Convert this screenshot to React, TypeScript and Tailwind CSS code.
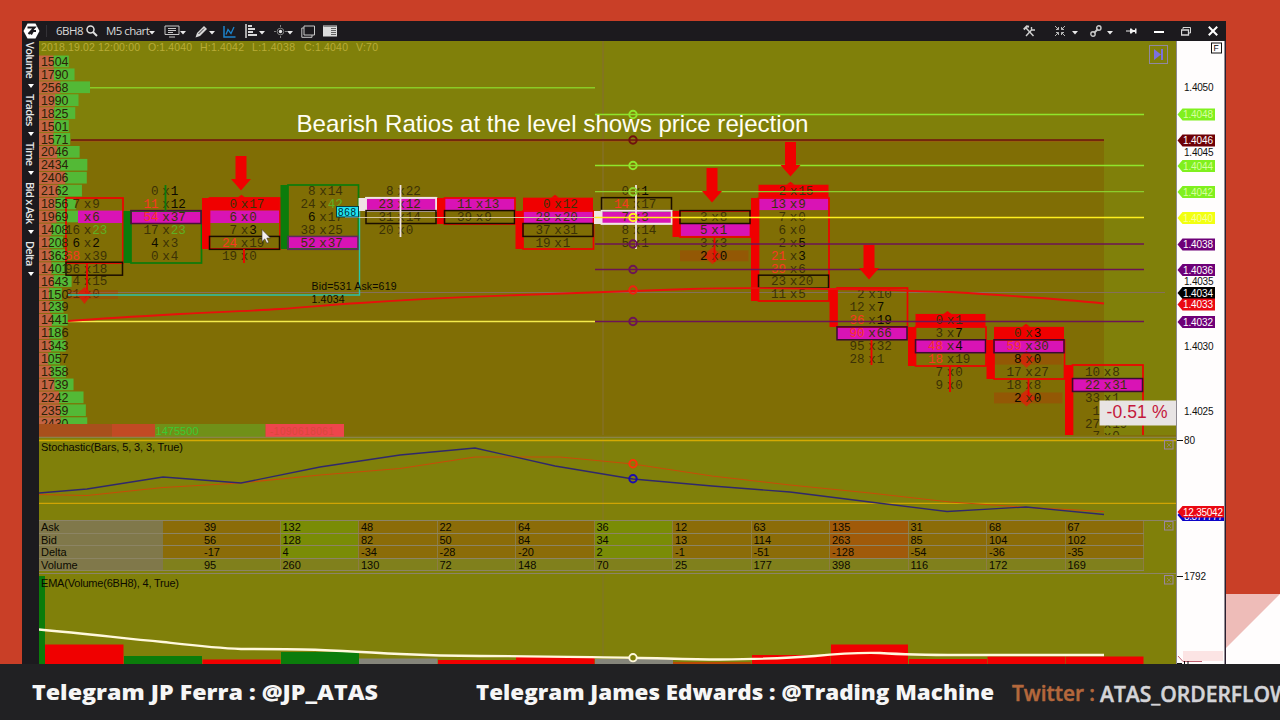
import React from 'react';

const ROW_H = 12.92;
const ROW_0 = 62;
const rowY = (row: number) => ROW_0 + row * ROW_H;
const rowTop = (row: number) => rowY(row) - ROW_H / 2;

const SANS = '"Liberation Sans", Arial, sans-serif';
const MONO = '"Liberation Mono", "Courier New", monospace';

const RED = '#f00000';
const GREEN = '#0b7c0b';
const WHITE = '#f0e4e4';
const MAGENTA = '#d913b5';
const OLIVE = '#80800a';

const profile = [
  1504, 1790, 2568, 1990, 1825, 1501, 1571, 2046, 2434, 2406, 2162, 1856, 1969, 1408, 1208,
  1363, 1401, 1643, 1150, 1239, 1441, 1186, 1343, 1057, 1358, 1739, 2242, 2359, 2430,
];
const redShare = [0.49, 0.42, 0.42, 0.41, 0.42, 0.5, 0.46, 0.45, 0.44, 0.55];

type Tone = 'd' | 'k' | 'r' | 'g';
const tones: Record<Tone, string> = { d: '#3c3206', k: '#0c0a00', r: '#f83822', g: '#5fae24' };

type Kind = 'poc' | 'box' | 'hot' | 'glow';

interface Cell {
  bid: string;
  ask: string;
  kind?: Kind;
  bt?: Tone;
  at?: Tone;
}

interface Bar {
  cx: number;
  first: number;
  color: string;
  body: [number, number];
  wick?: [number, number];
  pocEdge?: string;
  cells: Cell[];
}

const c = (bid: string, ask: string, kind?: Kind, bt: Tone = 'd', at: Tone = 'd'): Cell => ({ bid, ask, kind, bt, at });

const bars: Bar[] = [
  {
    cx: 87.5, first: 11, color: RED, body: [198, 263], wick: [263, 296],
    cells: [c('7', '9'), c('', '6', 'poc'), c('16', '23', undefined, 'd', 'g'), c('6', '2', undefined, 'k', 'k'), c('68', '39', undefined, 'r'), c('96', '18', 'box'), c('4', '15'), c('31', '0')],
  },
  {
    cx: 166, first: 10, color: GREEN, body: [211, 263], wick: [185, 211], pocEdge: '#4a0f3a',
    cells: [c('0', '1', undefined, 'd', 'k'), c('11', '12', undefined, 'r', 'k'), c('54', '37', 'poc', 'r'), c('17', '23', undefined, 'd', 'g'), c('4', '3', undefined, 'k'), c('0', '4')],
  },
  {
    cx: 244.5, first: 11, color: RED, body: [198, 249], wick: [249, 263],
    cells: [c('0', '17', 'hot'), c('6', '0', 'poc'), c('7', '3', undefined, 'd', 'k'), c('24', '19', 'box', 'r'), c('19', '0')],
  },
  {
    cx: 323, first: 10, color: GREEN, body: [185, 249], pocEdge: '#5b2a5b',
    cells: [c('8', '14'), c('24', '42', undefined, 'd', 'g'), c('6', '17', undefined, 'k'), c('38', '25'), c('52', '37', 'poc')],
  },
  {
    cx: 401, first: 10, color: WHITE, body: [198, 211], wick: [185, 237], pocEdge: WHITE,
    cells: [c('8', '22'), c('23', '12', 'poc'), c('31', '14', 'box'), c('20', '0')],
  },
  {
    cx: 479.5, first: 11, color: RED, body: [198, 224],
    cells: [c('11', '13', 'poc'), c('39', '9', 'box')],
  },
  {
    cx: 558, first: 11, color: RED, body: [211, 249],
    cells: [c('0', '12', 'hot'), c('28', '20', 'poc'), c('37', '31', 'box'), c('19', '1')],
  },
  {
    cx: 636.5, first: 10, color: WHITE, body: [211, 224], wick: [185, 249], pocEdge: WHITE,
    cells: [c('0', '1', undefined, 'd', 'k'), c('14', '17', 'box', 'r'), c('7', '3', 'poc'), c('8', '14'), c('5', '1')],
  },
  {
    cx: 715, first: 12, color: RED, body: [211, 237], wick: [237, 262],
    cells: [c('3', '8', 'box'), c('5', '1', 'poc'), c('3', '3'), c('2', '0', 'glow', 'k', 'k')],
  },
  {
    cx: 793.5, first: 10, color: RED, body: [198, 301],
    cells: [c('2', '15', 'hot'), c('13', '9', 'poc'), c('7', '0'), c('6', '0'), c('2', '5', undefined, 'd', 'k'), c('21', '3', undefined, 'r', 'k'), c('39', '6', undefined, 'r'), c('23', '20', 'box'), c('11', '5')],
  },
  {
    cx: 872, first: 18, color: RED, body: [288, 327], wick: [340, 365], pocEdge: '#3a0b30',
    cells: [c('2', '10'), c('12', '7', undefined, 'd', 'k'), c('36', '19', undefined, 'r', 'k'), c('90', '66', 'poc', 'r'), c('95', '32'), c('28', '1')],
  },
  {
    cx: 950.5, first: 20, color: RED, body: [327, 366], wick: [366, 392], pocEdge: '#3a0b30',
    cells: [c('0', '1', 'hot'), c('3', '7', undefined, 'd', 'k'), c('48', '4', 'poc', 'r', 'k'), c('18', '19', undefined, 'r'), c('7', '0'), c('9', '0')],
  },
  {
    cx: 1029, first: 21, color: RED, body: [340, 379], wick: [379, 396], pocEdge: '#3a0b30',
    cells: [c('0', '3', 'hot', 'd', 'k'), c('59', '30', 'poc', 'r'), c('8', '0', 'glow', 'k', 'k'), c('17', '27'), c('18', '8'), c('2', '0', 'glow', 'k', 'k')],
  },
  {
    cx: 1107.5, first: 24, color: RED, body: [365, 446], pocEdge: '#3a0b30',
    cells: [c('10', '8'), c('22', '31', 'poc'), c('33', '1'), c('1', '5'), c('27', '19'), c('7', '0')],
  },
];

const arrows = [
  { x: 241, y: 156 },
  { x: 712, y: 168 },
  { x: 790.5, y: 142 },
  { x: 869, y: 245 },
];

const levels = [
  { y: 114.5, color: '#8fe62c', x1: 595, x2: 1144 },
  { y: 140, color: '#701010', x1: 71, x2: 1104 },
  { y: 165.5, color: '#8fe62c', x1: 595, x2: 1144 },
  { y: 191.7, color: '#8cce2c', x1: 595, x2: 1144 },
  { y: 217.5, color: '#fff01e', x1: 595, x2: 1144 },
  { y: 244, color: '#6c1456', x1: 595, x2: 1144 },
  { y: 269.5, color: '#6c1456', x1: 595, x2: 1144 },
  { y: 321.5, color: '#6c1456', x1: 595, x2: 1144 },
];

const stats = [
  { name: 'Ask', values: [39, 132, 48, 22, 64, 36, 12, 63, 135, 31, 68, 67] },
  { name: 'Bid', values: [56, 128, 82, 50, 84, 34, 13, 114, 263, 85, 104, 102] },
  { name: 'Delta', values: [-17, 4, -34, -28, -20, 2, -1, -51, -128, -54, -36, -35] },
  { name: 'Volume', values: [95, 260, 130, 72, 148, 70, 25, 177, 398, 116, 172, 169] },
];

const volumes = [
  { x: 39, y: 576, w: 6, color: GREEN },
  { x: 45, y: 644.5, w: 78.5, color: RED },
  { x: 124, y: 656, w: 78, color: GREEN },
  { x: 202.5, y: 659.5, w: 78, color: RED },
  { x: 281, y: 652, w: 78, color: GREEN },
  { x: 359, y: 658.5, w: 78.5, color: '#85857a' },
  { x: 438, y: 660, w: 78, color: RED },
  { x: 516, y: 657, w: 78.5, color: RED },
  { x: 595, y: 659, w: 78, color: '#85857a' },
  { x: 673, y: 662, w: 78, color: '#b84a05' },
  { x: 752, y: 655, w: 78.5, color: RED },
  { x: 831, y: 644.5, w: 77, color: RED },
  { x: 909, y: 659, w: 78, color: RED },
  { x: 987.5, y: 656.5, w: 78, color: RED },
  { x: 1066, y: 656.5, w: 77.5, color: RED },
];

const priceTicks = [
  { y: 87.5, text: '1.4050' },
  { y: 152, text: '1.4045' },
  { y: 281.5, text: '1.4035' },
  { y: 346, text: '1.4030' },
  { y: 411.5, text: '1.4025' },
];

const priceTags = [
  { y: 114.5, text: '1.4048', bg: '#80f01e', fg: '#d8ffa0' },
  { y: 140.5, text: '1.4046', bg: '#6e0007', fg: '#ffffff' },
  { y: 166, text: '1.4044', bg: '#80f01e', fg: '#d8ffa0' },
  { y: 192, text: '1.4042', bg: '#80f01e', fg: '#d8ffa0' },
  { y: 218, text: '1.4040', bg: '#f2ff10', fg: '#f8ff9a' },
  { y: 244.5, text: '1.4038', bg: '#6e0078', fg: '#ffffff' },
  { y: 270, text: '1.4036', bg: '#6e0078', fg: '#ffffff' },
  { y: 293, text: '1.4034', bg: '#000000', fg: '#ffffff' },
  { y: 304.5, text: '1.4033', bg: '#ea0812', fg: '#ffffff' },
  { y: 322, text: '1.4032', bg: '#6e0078', fg: '#ffffff' },
];

const Ring: React.FC<{ y: number; color: string }> = ({ y, color }) => (
  <circle cx={633} cy={y} r={3.7} fill="none" stroke={color} strokeWidth={2} />
);

const CloseBox: React.FC<{ y: number }> = ({ y }) => (
  <g stroke="#9a86a0" fill="none">
    <rect x={1164.5} y={y + 0.5} width={8.5} height={8.5} />
    <path d={`M1167 ${y + 3}l4 4m0 -4l-4 4`} strokeWidth={0.6} />
  </g>
);

const BarShape: React.FC<{ bar: Bar }> = ({ bar }) => {
  const isFirst = bar.cx < 90;
  const left = isFirst ? 66 : bar.cx - 35;
  const width = bar.cx + 35.5 - left;
  const [top, bottom] = bar.body;
  return (
    <g>
      {bar.cells.map((cell, i) => {
        const y = rowTop(bar.first + i);
        if (cell.kind === 'poc') {
          const x = isFirst ? 78 : left;
          return <rect key={i} x={x} y={y} width={bar.cx + 35 - x} height={ROW_H - 0.5} fill={MAGENTA} />;
        }
        if (cell.kind === 'hot') {
          return (
            <g key={i} fill={RED}>
              <rect x={left} y={y} width={width - 0.5} height={ROW_H} />
              <path d={`M${bar.cx - 7} ${y}l4 -3l4 3z`} />
            </g>
          );
        }
        if (cell.kind === 'glow') {
          return (
            <g key={i}>
              <rect x={left} y={y + 1} width={width - 2} height={ROW_H - 2} fill="#c02808" opacity={0.3} />
              <path d={`M${bar.cx - 2.5} ${y - 2}l9 8.5l-9 8.5l-9 -8.5z`} fill="#e81808" opacity={0.7} />
            </g>
          );
        }
        return null;
      })}
      {!isFirst && <rect x={bar.cx - 42.5} y={top} width={7.5} height={bottom - top} fill={bar.color} />}
      <rect x={left} y={top} width={width} height={bottom - top} fill="none" stroke={bar.color} strokeWidth={1.7} />
      {bar.cells.map((cell, i) => {
        const y = rowTop(bar.first + i);
        if (cell.kind === 'box') {
          return <rect key={i} x={left} y={y} width={width - 0.5} height={ROW_H} fill="none" stroke="#1a0d00" strokeWidth={1.5} />;
        }
        if (cell.kind === 'poc' && bar.pocEdge) {
          return <rect key={i} x={left} y={y} width={width - 0.5} height={ROW_H} fill="none" stroke={bar.pocEdge} strokeWidth={1.5} />;
        }
        return null;
      })}
      {bar.cells.map((cell, i) => {
        const y = rowY(bar.first + i) + 3.8;
        return (
          <g key={i} fontFamily={MONO} fontSize={12.6}>
            <text x={bar.cx - 7.5} y={y} textAnchor="end" fill={tones[cell.bt ?? 'd']}>{cell.bid}</text>
            <text x={bar.cx} y={y} textAnchor="middle" fill={tones.d}>x</text>
            <text x={bar.cx + 4.8} y={y} fill={tones[cell.at ?? 'd']}>{cell.ask}</text>
          </g>
        );
      })}
      {bar.wick && (
        <line x1={bar.cx - 0.5} x2={bar.cx - 0.5} y1={bar.wick[0]} y2={bar.wick[1]} stroke={bar.color} strokeWidth={1.8} />
      )}
    </g>
  );
};

const PricePanel: React.FC = () => (
  <svg className="block" width={1137} height={397} viewBox="39 41 1137 397" fontFamily={SANS}>
    <rect x={39} y={41} width={1137} height={397} fill={OLIVE} />
    <rect x={39} y={140} width={1065} height={297} fill="#806e05" />
    <line x1={603} x2={603} y1={41} y2={438} stroke="#85702c" strokeWidth={1.3} />
    <g fontSize={10.5} fill="#b8ac36">
      <text x={41} y={51} textLength={99}>2018.19.02 12:00:00</text>
      <text x={148} y={51} textLength={44}>O:1.4040</text>
      <text x={200} y={51} textLength={44}>H:1.4042</text>
      <text x={252} y={51} textLength={43}>L:1.4038</text>
      <text x={304} y={51} textLength={44}>C:1.4040</text>
      <text x={356} y={51} textLength={22}>V:70</text>
    </g>

    <line x1={68} x2={1165} y1={292.5} y2={292.5} stroke="#85705a" />
    <line x1={90} x2={595} y1={87.7} y2={87.7} stroke="#8acc26" strokeWidth={1.6} />
    <line x1={68} x2={595} y1={321.5} y2={321.5} stroke="#f4ec4c" strokeWidth={1.3} />
    <line x1={71} x2={1104} y1={141.5} y2={141.5} stroke="#98600c" strokeWidth={0.8} />

    {/* volume profile */}
    {profile.map((volume, i) => {
      const width = (volume / 2568) * 51;
      const red = width * (redShare[i] ?? 0.45);
      return (
        <g key={i}>
          <rect x={39} y={rowTop(i)} width={red} height={ROW_H - 0.8} fill="#c46444" />
          <rect x={39 + red} y={rowTop(i)} width={width - red} height={ROW_H - 1.2} fill="#53b936" />
        </g>
      );
    })}

    {bars.map((bar) => <BarShape key={bar.cx} bar={bar} />)}

    <rect x={68} y={290} width={50} height={9} fill="#c02808" opacity={0.3} />
    <path d="M77 294L84.500 287L92 294L84.500 304z" fill="#e01808" opacity={0.8} />
    {profile.map((volume, i) => (
      <text key={i} x={41} y={rowY(i) + 4} fontSize={12} fill="#2a2206" textLength={27.5} lengthAdjust="spacingAndGlyphs">{volume}</text>
    ))}

    {/* total volume strip */}
    <rect x={39} y={424} width={116} height={13} fill="#a8501c" />
    <rect x={112} y={424} width={43} height={13} fill="#c24a24" />
    <rect x={155} y={424} width={110.5} height={13} fill="#709018" />
    <rect x={265.5} y={424} width={78.5} height={13} fill="#ee454c" />
    <text x={155.5} y={434.5} fontSize={11} fill="#3cc832" textLength={43}>1475500</text>
    <text x={270} y={434.5} fontSize={10} fill="#d8483c" textLength={64}>-1090618061</text>

    <path
      d="M68 321C110 318 145 316 180 314C220 312 250 311 280 309C310 307 330 304.500 360 303C410 299.500 460 297 520 295C580 292.500 640 291 690 289C740 287 790 288.500 830 289C870 289 910 291 950 292C1000 295 1050 298 1104 303.500"
      fill="none"
      stroke="#e8100c"
      strokeWidth={1.8}
    />
    <Ring y={290} color="#f02010" />

    <path d="M68 295H359.500V211" fill="none" stroke="#2cc4a8" strokeWidth={1.4} />
    <line x1={345} x2={595} y1={217.5} y2={217.5} stroke="#d8c8a0" strokeWidth={1.1} />
    {levels.map((level) => (
      <g key={level.y}>
        <line x1={level.x1} x2={level.x2} y1={level.y} y2={level.y} stroke={level.color} strokeWidth={1.3} />
        <Ring y={level.y} color={level.color} />
      </g>
    ))}

    <rect x={336.5} y={206.5} width={22} height={10.5} fill="#20e4f0" stroke="#083c44" />
    <text x={338} y={215.5} fontSize={10} fill="#002830" textLength={18}>868</text>
    <text x={311.5} y={289.5} fontSize={10.5} fill="#0c0a00" textLength={85}>Bid=531 Ask=619</text>
    <text x={311.5} y={302.5} fontSize={10.5} fill="#0c0a00" textLength={33}>1.4034</text>

    {arrows.map((a) => (
      <path key={a.x} fill={RED} d={`M${a.x - 5.5} ${a.y}h11v23h4.500l-10 11.500l-10 -11.500h4.500z`} />
    ))}

    <text x={296.5} y={131.5} fontSize={24} fill="#fffef4" textLength={512} lengthAdjust="spacingAndGlyphs">
      Bearish Ratios at the level shows price rejection
    </text>

    <rect x={1149.5} y={45.5} width={18} height={18} fill="none" stroke="#9088a0" />
    <path d="M1154 49v11l7 -5.500zM1161 49h2v11h-2z" fill="#7c70dc" />

    <rect x={1099.5} y={400.5} width={76.5} height={25} fill="#e8e4e4" />
    <text x={1106.5} y={418} fontSize={17.5} fill="#c4183c" textLength={61}>-0.51 %</text>

    <path d="M262 229.500v12l2.800 -2.600l2 4.400l2 -1l-2 -4.200h3.600z" fill="#f4f0f0" stroke="#403830" strokeWidth={0.6} />
    <rect x={345} y={435} width={831} height={2} fill="#80700a" />
    <line x1={39} x2={1176} y1={437.3} y2={437.3} stroke="#8a8448" strokeWidth={1.2} />
  </svg>
);

const StochasticPanel: React.FC = () => (
  <svg className="block" width={1137} height={82} viewBox="39 438 1137 82" fontFamily={SANS}>
    <rect x={39} y={438} width={1137} height={82} fill={OLIVE} />
    <line x1={603} x2={603} y1={438} y2={520} stroke="#85762c" />
    <line x1={39} x2={1176} y1={440.5} y2={440.5} stroke="#d4aa04" strokeWidth={1.3} />
    <line x1={39} x2={1176} y1={503.3} y2={503.3} stroke="#d0a404" strokeWidth={1.3} />
    <polyline
      points="39,494.500 87,495.500 163,487.500 241,483 320,475 400,468.500 475,457 560,457 633,464 712,476 790,485 870,493 950,502 1029,507.500 1104,511.500"
      fill="none" stroke="#c84c08" strokeWidth={1.2}
    />
    <polyline
      points="39,493 87,489 163,477 241,483 320,467 400,455 475,448 555,466 633,479 712,486 790,492 870,502 947,511.500 1026,507 1104,514.500"
      fill="none" stroke="#30286c" strokeWidth={1.3}
    />
    <Ring y={463.7} color="#f83408" />
    <Ring y={478.7} color="#1c0cb0" />
    <text x={41} y={451} fontSize={11} fill="#0c0a00" textLength={142}>Stochastic(Bars, 5, 3, 3, True)</text>
    <CloseBox y={440} />
  </svg>
);

const cellTone = (delta: number) => {
  if (delta > 0) return 'bg-[#7a8c06]';
  if (delta < -100) return 'bg-[#a05a0a]';
  return 'bg-[#8b6c08]';
};

const StatsTable: React.FC = () => (
  <div className="flex h-[54px] w-full border-y border-[#8c8468] bg-[#80800a] text-[11px] leading-[12px] text-[#0c0a00]">
    <div className="w-[1105px] shrink-0">
      {stats.map((row) => (
        <div key={row.name} className="flex h-[12.6px] border-b border-[#8c8464]">
          <div className="w-[124px] shrink-0 bg-[#80784a] pl-[2px]">{row.name}</div>
          <div className={`w-[39px] shrink-0 ${row.name === 'Volume' ? 'bg-[#80801c]' : 'bg-[#8b6c08]'}`} />
          {row.values.map((value, i) => (
            <div
              key={i}
              className={`w-[78.5px] shrink-0 border-r border-[#8c7c44] pl-[2px] ${
                row.name === 'Volume' ? 'bg-[#80801c]' : cellTone(stats[2].values[i])
              }`}
            >
              {value}
            </div>
          ))}
        </div>
      ))}
    </div>
    <svg className="ml-[19px] block" width={12} height={12} viewBox="1163 521 12 12">
      <CloseBox y={521} />
    </svg>
  </div>
);

const VolumePanel: React.FC = () => (
  <svg className="block" width={1137} height={90} viewBox="39 574 1137 90" fontFamily={SANS}>
    <rect x={39} y={574} width={1137} height={90} fill={OLIVE} />
    <line x1={603} x2={603} y1={574} y2={664} stroke="#80742c" />
    {volumes.map((v) => (
      <rect key={v.x} x={v.x} y={v.y} width={v.w} height={664 - v.y} fill={v.color} />
    ))}
    <path
      d="M39 629.500C90 634 120 638 163 642C190 645 215 648 241 649C270 649 300 649 320 650C350 651 370 652.500 400 654C430 655.500 450 656 480 656C540 656 580 657 633 657.700C670 658.500 690 659.500 720 659.500C760 659 790 658 815 656C840 653.500 860 652.500 880 653C910 655 930 655 960 655H1104"
      fill="none" stroke="#fff8dc" strokeWidth={2.4}
    />
    <circle cx={633} cy={657.7} r={3.7} fill="#80800a" stroke="#fff8dc" strokeWidth={1.9} />
    <text x={41} y={586.5} fontSize={11} fill="#0c0a00" textLength={138}>EMA(Volume(6BH8), 4, True)</text>
    <CloseBox y={575} />
  </svg>
);

const PriceAxis: React.FC = () => (
  <svg className="block shrink-0" width={50} height={623} viewBox="1176 41 50 623" fontFamily={SANS} fontSize={10}>
    <rect x={1176} y={41} width={50} height={623} fill="#fffdfd" />
    <rect x={1176} y={41} width={1} height={623} fill="#8c8890" />
    <rect x={1224.5} y={41} width={1.5} height={623} fill="#2a2030" />
    <rect x={1211.5} y={43} width={10} height={10} fill="none" stroke="#101010" />
    <text x={1213.5} y={51} fontSize={8.5}>F</text>
    {priceTicks.map((tick) => (
      <text key={tick.text} x={1184} y={tick.y + 3.6} fill="#101010" textLength={29.5}>{tick.text}</text>
    ))}
    {priceTags.map((tag) => (
      <g key={tag.text}>
        <path d={`M1177.500 ${tag.y}l5 -6h32.500v12h-32.500z`} fill={tag.bg} />
        <text x={1183} y={tag.y + 3.6} fill={tag.fg} textLength={30}>{tag.text}</text>
      </g>
    ))}
    <path d="M1177 440.500h6M1177 576.500h6" stroke="#101010" />
    <text x={1184} y={444.2} fill="#101010" textLength={11}>80</text>
    <text x={1184} y={580.2} fill="#101010" textLength={22}>1792</text>
    <path d="M1177.500 515l5 -6h41.500v12h-41.500z" fill="#0c04c8" />
    <text x={1184} y={519.5} fill="#ffffff" textLength={39}>8.877777</text>
    <path d="M1177.500 512l5 -6h41.500v11.500h-41.500z" fill="#ea0812" />
    <text x={1183} y={515.6} fill="#ffffff" textLength={40}>12.35042</text>
    <path d="M1183 651h40v10h-40z" fill="#fce4e4" />
    <path d="M1178 656l5 5.500h19" fill="none" stroke="#c06070" />
    <path d="M1177 663.500h5M1184.500 661v3M1188 661v3" stroke="#101010" />
  </svg>
);

const Caret: React.FC = () => (
  <svg className="mt-[4px] block shrink-0" width={6} height={4} viewBox="0 0 6 4">
    <path d="M0 0h6l-3 3.500z" fill="#e8e8e8" />
  </svg>
);

const TitleBar: React.FC = () => (
  <div className="flex h-[20px] items-center bg-[#1c1a1e] text-[11.5px] text-[#d8d8d8]">
    <svg className="ml-px block" width={17} height={16} viewBox="0 0 17 16">
      <path d="M4.500 0.500h8l4 7.500l-4 7.500h-8l-4 -7.500z" fill="#ffffff" />
      <path d="M4.500 4.500h7l-6 6.500M8 11.500l2 -3.500h3" fill="none" stroke="#1c1a1e" strokeWidth={2} />
    </svg>
    <div className="ml-[6px] h-[12px] w-px bg-[#333136]" />
    <span className="ml-[9px] w-[26px] tracking-[-0.5px]">6BH8</span>
    <svg className="ml-[4px] block" width={12} height={12} viewBox="0 0 12 12" fill="none" stroke="#e0e0e0">
      <circle cx={4.5} cy={4.5} r={3.5} strokeWidth={1.5} />
      <path d="M7 7l4 4" strokeWidth={2} />
    </svg>
    <span className="ml-[8px] w-[43px] tracking-[-0.55px] whitespace-nowrap">M5 chart</span>
    <Caret />
    <svg className="ml-[9px] block" width={16} height={13} viewBox="0 0 16 13" fill="none" stroke="#c8c8c8">
      <path d="M1 1h14v8.500H1zM4 3.500h8M4 5.500h8M4 7.500h5M5 12h6" />
    </svg>
    <Caret />
    <svg className="ml-[9px] block" width={13} height={13} viewBox="0 0 13 13">
      <path d="M0.500 12.500l1.500 -4.500l7 -7l3 3l-7 7z" fill="#d8d8d8" />
      <path d="M3.500 9l5.500 -5.500" stroke="#1c1a1e" strokeWidth={0.9} />
    </svg>
    <div className="ml-px"><Caret /></div>
    <svg className="ml-[8px] block" width={13} height={13} viewBox="0 0 13 13" fill="none" stroke="#1c84cc">
      <path d="M1 1v11h11.500" strokeWidth={1.5} />
      <path d="M3 9.500l2 -5l3 4l3 -6.500" strokeWidth={1.3} />
    </svg>
    <svg className="ml-[9px] block" width={13} height={14} viewBox="0 0 13 14" fill="none" stroke="#d8d8d8">
      <path d="M1 0v14" strokeWidth={1.5} />
      <path d="M3 2h4M3 5h7M3 8h5M3 11h9" strokeWidth={1.8} />
    </svg>
    <div className="ml-px"><Caret /></div>
    <svg className="ml-[9px] block" width={13} height={13} viewBox="0 0 13 13" fill="none" stroke="#808080">
      <circle cx={6.5} cy={6.5} r={3.3} />
      <circle cx={6.5} cy={6.5} r={1.7} fill="#e8e8e8" stroke="none" />
      <path d="M6.500 0v2M6.500 11v2M0 6.500h2M11 6.500h2" />
    </svg>
    <Caret />
    <svg className="ml-[8px] block" width={14} height={13} viewBox="0 0 14 13" fill="none" stroke="#c8c8c8">
      <path d="M3 1h10.500v9H3z" />
      <path d="M3 3H0.800v9.300H11V10" />
    </svg>
    <svg className="ml-[8px] block" width={14} height={12} viewBox="0 0 14 12">
      <path d="M0 0.500h14v11H0z" fill="#dcdcdc" />
      <path d="M8 3.500h5M8 5.500h5M8 7.500h5M8 9.500h5" stroke="#555" strokeWidth={0.9} />
      <path d="M0.500 1.500h13" stroke="#888" />
    </svg>

    <svg className="ml-auto block" width={13} height={12} viewBox="0 0 13 12" fill="none" stroke="#d0d0d0">
      <path d="M3 3l7.500 8" strokeWidth={1.5} />
      <path d="M9 4.500l-6 6.500M8.500 2v3h3.500" strokeWidth={1.4} />
      <path d="M0.800 4.500l3 -3.200l2.200 0.400" strokeWidth={2} />
    </svg>
    <svg className="ml-[18px] block" width={12} height={12} viewBox="0 0 12 12" fill="none" stroke="#b8b8b8">
      <path d="M1 1l3.500 3.500M11 1L7.500 4.500M1 11l3.500 -3.500M11 11L7.500 7.500M2 4.500h2.500V2M7.500 2v2.500H10M2 7.500h2.500V10M10 7.500H7.500V10" />
    </svg>
    <div className="ml-[6px]"><Caret /></div>
    <svg className="ml-[12px] block" width={12} height={12} viewBox="0 0 12 12" fill="none" stroke="#c8c8c8" strokeWidth={1.4}>
      <circle cx={8.8} cy={3} r={2.2} />
      <circle cx={3} cy={9} r={2.2} />
      <path d="M4 8l4 -4" strokeWidth={1.8} />
    </svg>
    <div className="ml-[5px]"><Caret /></div>
    <svg className="ml-[13px] block" width={11} height={8} viewBox="0 0 11 8">
      <path d="M0 3.500h4v1H0zM4 1.500h1.500L7 3h2V1.500h1.500v5H9V5H7L5.500 6.500H4z" fill="#f0f0f0" />
    </svg>
    <div className="mt-[2px] ml-[17px] h-[2px] w-[10px] bg-white" />
    <svg className="ml-[17px] block" width={10} height={9} viewBox="0 0 10 9" fill="none" stroke="#d8d8d8">
      <path d="M2 2V0.500h7.500V6H8" />
      <path d="M0.500 3h7v5h-7z" strokeWidth={1.3} />
    </svg>
    <svg className="mr-[8px] ml-[17px] block" width={10} height={10} viewBox="0 0 9 9">
      <path d="M0.700 0.700l7.600 7.600M8.300 0.700l-7.600 7.600" stroke="#ffffff" strokeWidth={1.8} />
    </svg>
  </div>
);

const sideTabs = [
  { name: 'Volume', size: 'h-[52px]' },
  { name: 'Trades', size: 'h-[48px]' },
  { name: 'Time', size: 'h-[40px]' },
  { name: 'Bid x Ask', size: 'h-[59px]' },
  { name: 'Delta', size: 'h-[60px]' },
];

const SideTabs: React.FC = () => (
  <div className="flex w-[17px] shrink-0 flex-col bg-[#1c1a1e] pt-px">
    {sideTabs.map((tab) => (
      <div key={tab.name} className={`flex flex-col items-center gap-[6px] ${tab.size}`}>
        <span className="text-[11px] leading-[15px] font-semibold tracking-[-0.7px] whitespace-nowrap text-[#e8e8e8] [writing-mode:vertical-rl]">
          {tab.name}
        </span>
        <svg className="block" width={6} height={4} viewBox="0 0 6 4">
          <path d="M0 0h6l-3 4z" fill="#ffffff" />
        </svg>
      </div>
    ))}
  </div>
);

const Ticker: React.FC = () => (
  <div className="h-[56px] w-full bg-[#212123]">
    <svg className="block" width={1280} height={56} viewBox="0 664 1280 56" fontFamily={'"Open Sans", "Noto Sans", sans-serif'}>
      <g fontSize={20.5} fontWeight={800} fill="#f6f6f6">
        <text x={32} y={700} textLength={346} lengthAdjust="spacingAndGlyphs">Telegram JP Ferra : @JP_ATAS</text>
        <text x={476} y={700} textLength={518} lengthAdjust="spacingAndGlyphs">Telegram James Edwards : @Trading Machine</text>
      </g>
      <g fontSize={21.5} fontWeight={600} strokeWidth={0.5}>
        <text x={1012} y={701} fill="#b4683c" stroke="#b4683c" textLength={83} lengthAdjust="spacingAndGlyphs">Twitter :</text>
        <text x={1100} y={702} fill="#d4d4d8" stroke="#d4d4d8" textLength={190} lengthAdjust="spacingAndGlyphs">ATAS_ORDERFLOW</text>
      </g>
    </svg>
  </div>
);

const App: React.FC = () => {
  return (
    <div className="flex h-[720px] w-[1280px] flex-col overflow-hidden bg-[#c93f27] font-['Liberation_Sans',Arial,sans-serif]">
      <div className="flex h-[664px] pt-[21px] pl-[22px]">
        <div className="w-[1204px] shrink-0 font-['Open_Sans','Noto_Sans',sans-serif]">
          <TitleBar />
          <div className="flex h-[623px]">
            <SideTabs />
            <div className="w-[1137px] shrink-0 font-['Liberation_Sans',Arial,sans-serif]">
              <PricePanel />
              <StochasticPanel />
              <StatsTable />
              <VolumePanel />
            </div>
            <PriceAxis />
          </div>
        </div>
        <svg className="mt-auto block" width={54} height={70} viewBox="0 0 54 70">
          <rect width={54} height={70} fill="#fffdfd" />
          <path d="M0 0h54L0 54z" fill="#eebcb8" />
        </svg>
      </div>
      <Ticker />
    </div>
  );
};

export default App;
